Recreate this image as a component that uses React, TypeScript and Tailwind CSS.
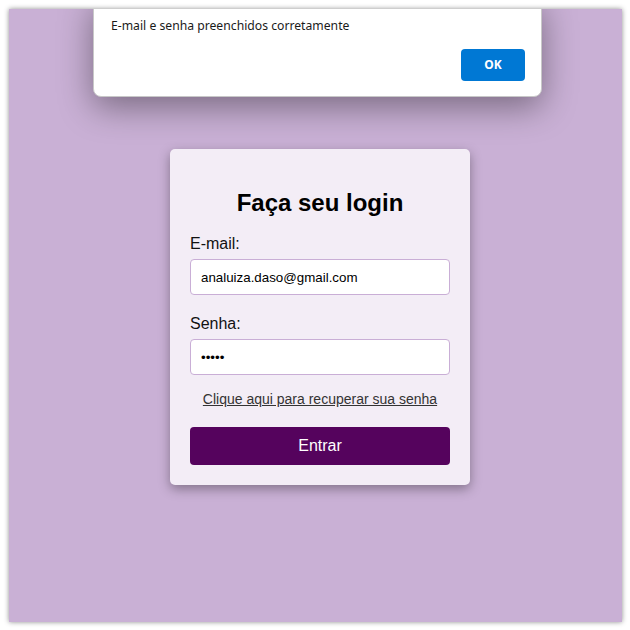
import { useState } from 'react'

function App() {
  const [email, setEmail] = useState<string>('analuiza.daso@gmail.com')
  const [senha, setSenha] = useState<string>('12345')

  return (
    <div className="w-[630px] h-[630px] bg-white pl-[9px] pt-[9px] pr-[8px] pb-[8px]">
      <div className="relative w-full h-full overflow-hidden bg-[#c9b0d5] shadow-[0_0_5px_rgba(0,0,0,0.45)] font-['Liberation_Sans',Arial,sans-serif]">
        {/* alerta */}
        <div className="absolute left-[84px] top-[-12px] w-[449px] h-[100px] bg-white rounded-[8px] border border-[#c8c8c8] shadow-[0_10px_34px_rgba(0,0,0,0.4)] font-['Noto_Sans',sans-serif]">
          <p className="pl-[17px] pt-[19px] text-[12.2px] text-[#1a1a1a]">
            E-mail e senha preenchidos corretamente
          </p>
          <div className="flex justify-end pr-[16px] pt-[14px]">
            <button className="w-[64px] h-[32px] rounded-[4px] bg-[#0078d4] text-white text-[12px] font-bold">
              OK
            </button>
          </div>
        </div>

        <div className="flex pl-[161px] pt-[140px]">
          <form className="w-[300px] bg-[#f3edf6] rounded-[5px] shadow-[0_4px_12px_rgba(0,0,0,0.35)] px-[20px] pt-[40px] pb-[20px] flex flex-col">
            <h2 className="text-[24px] leading-[28px] font-bold text-black text-center">Faça seu login</h2>

            <label htmlFor="email" className="mt-[18px] text-[16px] leading-[18px] text-[#111]">E-mail:</label>
            <input
              id="email"
              type="text"
              className="mt-[6px] h-[36px] w-full bg-white border border-[#c9aed6] rounded-[4px] px-[10px] text-[13.33px] text-black outline-none"
              value={email}
              onChange={(e) => setEmail(e.target.value)}
            />

            <label htmlFor="senha" className="mt-[20px] text-[16px] leading-[18px] text-[#111]">Senha:</label>
            <input
              id="senha"
              type="password"
              className="mt-[6px] h-[36px] w-full bg-white border border-[#c9aed6] rounded-[4px] px-[10px] text-[13.33px] text-black outline-none"
              value={senha}
              onChange={(e) => setSenha(e.target.value)}
            />

            <a href="#" className="mt-[16px] text-center text-[14px] leading-[16px] text-[#333] underline">
              Clique aqui para recuperar sua senha
            </a>

            <button type="submit" className="mt-[20px] h-[38px] w-full rounded-[4px] bg-[#55035d] text-white text-[16px]">
              Entrar
            </button>
          </form>
        </div>
      </div>
    </div>
  )
}

export default App
